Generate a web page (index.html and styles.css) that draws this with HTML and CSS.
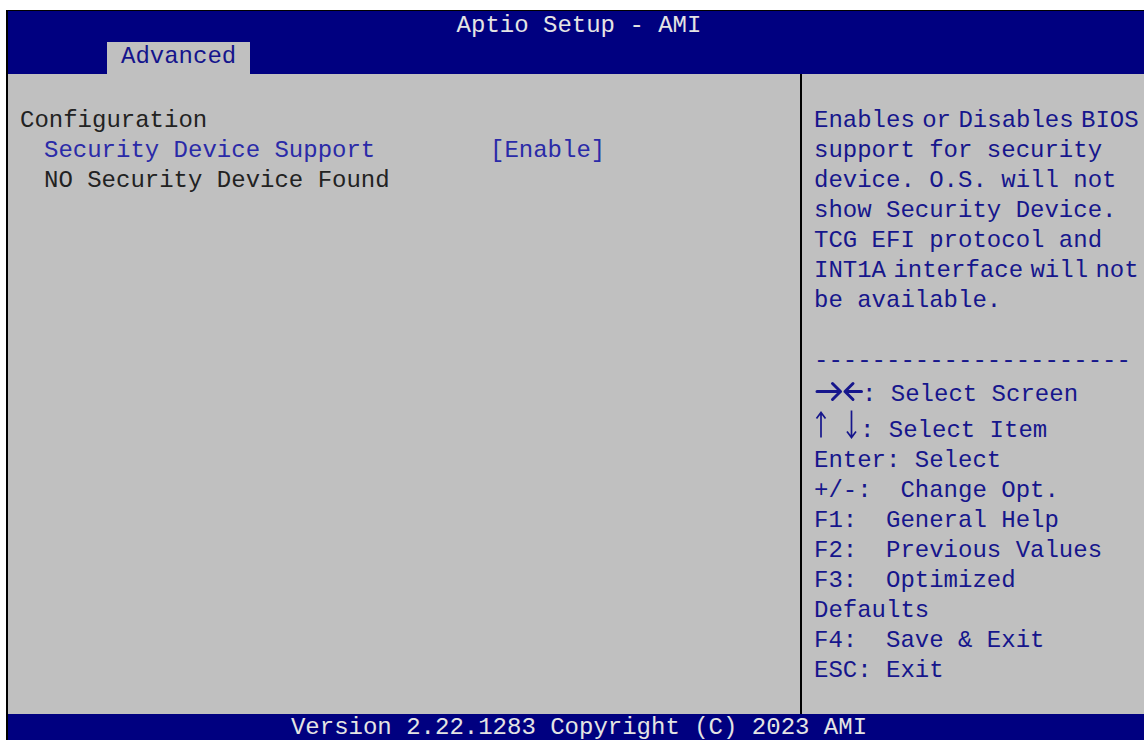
FILE: index.html
```html
<!DOCTYPE html>
<html lang="en">
<head>
<meta charset="utf-8">
<title>Aptio Setup - AMI</title>
<link rel="stylesheet" href="styles.css">
</head>
<body>
<div class="screen">
  <header class="top">
    <div class="title">Aptio Setup - AMI</div>
    <nav class="tabs"><span class="tab">Advanced</span></nav>
  </header>

  <main class="panes">
    <section class="items">
      <div class="heading">Configuration</div>
      <div class="row option"><span class="label">Security Device Support</span><span class="value">[Enable]</span></div>
      <div class="row info"><span class="label">NO Security Device Found</span></div>
    </section>

    <aside class="help">
      <div class="ln tight">Enables or Disables BIOS</div>
      <div class="ln">support for security</div>
      <div class="ln">device. O.S. will not</div>
      <div class="ln">show Security Device.</div>
      <div class="ln">TCG EFI protocol and</div>
      <div class="ln tight">INT1A interface will not</div>
      <div class="ln">be available.</div>
      <div class="ln blank"></div>
      <div class="ln rule">----------------------</div>
      <div class="ln screen-keys"><svg class="keys lr" width="48" height="30" viewBox="0 0 48 30" aria-hidden="true"><path d="M3 11.5H26.5M18.5 3.5L26.5 11.5L18.5 19.5" /><path d="M47.5 11.5H31M39 3.5L31 11.5L39 19.5" /></svg>: Select Screen</div>
      <div class="ln"><svg class="keys ud" width="46" height="30" viewBox="0 0 46 30" aria-hidden="true"><path d="M7 21.5V-3.5M2.5 2.5L7 -3.5L11.5 2.5" /><path d="M37.5 -5.5V21M33 15.5L37.5 21.5L42 15.5" /></svg>: Select Item</div>
      <div class="ln">Enter: Select</div>
      <div class="ln">+/-:  Change Opt.</div>
      <div class="ln">F1:  General Help</div>
      <div class="ln">F2:  Previous Values</div>
      <div class="ln">F3:  Optimized</div>
      <div class="ln">Defaults</div>
      <div class="ln">F4:  Save &amp; Exit</div>
      <div class="ln">ESC: Exit</div>
    </aside>
  </main>

  <footer class="bottom">Version 2.22.1283 Copyright (C) 2023 AMI</footer>
</div>
</body>
</html>
```

FILE: styles.css
```css
html,
body {
  margin: 0;
  height: 100%;
  overflow: hidden;
  background: #ffffff;
}

/* framed setup console */
.screen {
  margin: 10px 0 0 6px;
  width: 1142px;
  height: 729px;
  border-left: 2px solid #000;
  border-top: 1px solid #000;
  display: flex;
  flex-direction: column;
  font-family: "Liberation Mono", "Courier New", monospace;
  font-size: 24px;
  line-height: 30px;
}

/* blue title bar with the tab strip */
.top {
  background: #000080;
  height: 63px;
  display: flex;
  flex-direction: column;
}

.title {
  height: 31px;
  text-align: center;
  color: #e4e4e4;
}

.tabs {
  height: 32px;
  padding-left: 99px;
  display: flex;
}

.tab {
  background: #c0c0c0;
  color: #14148c;
  padding: 1px 14px 0;
  height: 31px;
  line-height: 28px;
}

/* grey work area: item list and help column */
.panes {
  flex: 1;
  background: #c0c0c0;
  display: flex;
  min-height: 0;
}

.items {
  width: 794px;
  box-sizing: border-box;
  border-right: 2px solid #000;
  padding: 32px 0 0 12px;
  color: #222222;
}

.row {
  display: flex;
  padding-left: 24px;
  white-space: pre;
}

.label {
  width: 446px;
}

.option {
  color: #2a2aa8;
}

.help {
  flex: 1;
  padding: 32px 0 0 12px;
  color: #16168c;
  overflow: hidden;
}

.ln {
  height: 30px;
  white-space: pre;
}

.tight {
  word-spacing: -7px;
}

.rule {
  height: 34px;
}

.screen-keys {
  height: 36px;
}

/* arrow key glyphs, drawn against the top of the line box */
.keys {
  display: inline-block;
  vertical-align: top;
  overflow: visible;
}

.keys path {
  fill: none;
  stroke: #16168c;
}

.keys.lr path {
  stroke-width: 3;
  stroke-linecap: round;
  stroke-linejoin: round;
}

.keys.ud path {
  stroke-width: 1.7;
}

/* version strip */
.bottom {
  height: 26px;
  line-height: 28px;
  overflow: hidden;
  background: #000080;
  color: #e4e4e4;
  text-align: center;
  white-space: pre;
}
```
